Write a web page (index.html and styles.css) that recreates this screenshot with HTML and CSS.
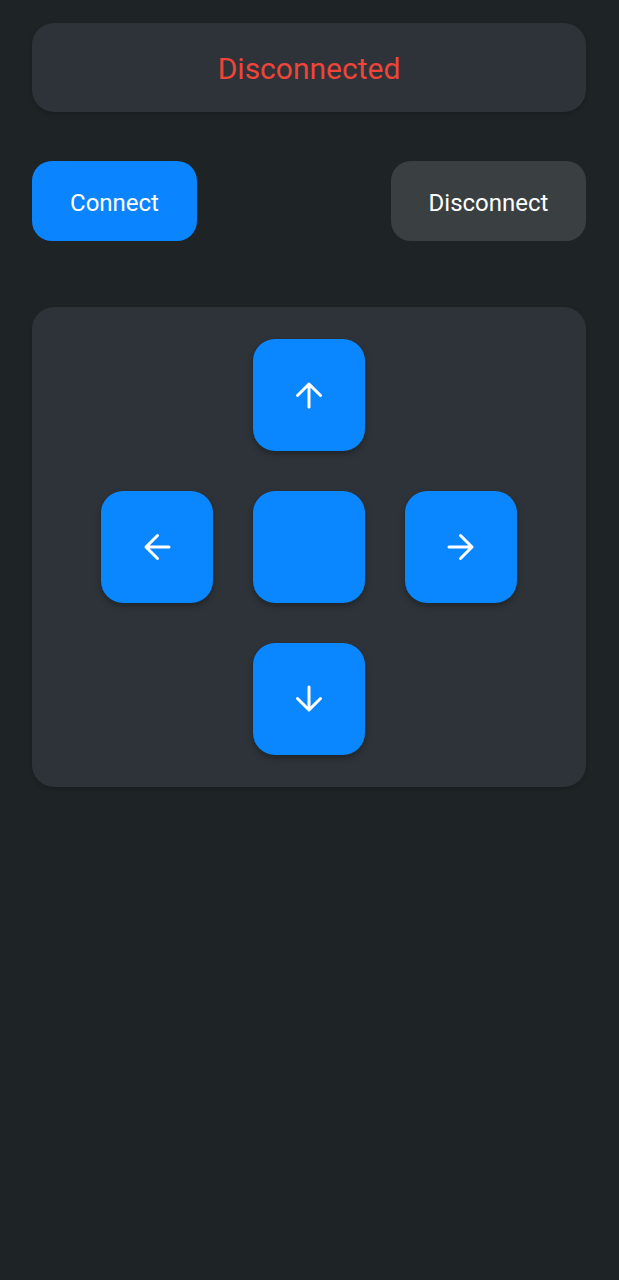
FILE: index.html
```html
<!DOCTYPE html>
<html>
<head>
<meta charset="utf-8">
<link rel="stylesheet" href="styles.css">
</head>
<body>
<div class="app">
  <div class="status-card"><span class="status-text">Disconnected</span></div>
  <div class="actions">
    <button class="btn btn-connect">Connect</button>
    <button class="btn btn-disconnect">Disconnect</button>
  </div>
  <div class="pad-card">
    <div class="pad">
      <button class="key key-up" aria-label="Up">
        <svg viewBox="0 0 28 28" width="28" height="28"><path d="M14 3V26M2.5 14.5L14 3L25.5 14.5"/></svg>
      </button>
      <button class="key key-left" aria-label="Left">
        <svg viewBox="0 0 28 28" width="28" height="28" class="rot-left"><path d="M14 3V26M2.5 14.5L14 3L25.5 14.5"/></svg>
      </button>
      <button class="key key-center" aria-label="Stop"></button>
      <button class="key key-right" aria-label="Right">
        <svg viewBox="0 0 28 28" width="28" height="28" class="rot-right"><path d="M14 3V26M2.5 14.5L14 3L25.5 14.5"/></svg>
      </button>
      <button class="key key-down" aria-label="Down">
        <svg viewBox="0 0 28 28" width="28" height="28" class="rot-down"><path d="M14 3V26M2.5 14.5L14 3L25.5 14.5"/></svg>
      </button>
    </div>
  </div>
</div>
</body>
</html>
```

FILE: styles.css
```css
* { box-sizing: border-box; }
html, body { margin: 0; padding: 0; }
body {
  background: #1e2426;
  font-family: Roboto, "Noto Sans", "Liberation Sans", sans-serif;
  width: 619px;
  min-height: 1280px;
}
.app {
  padding: 23px 33px 0 32px;
  display: flex;
  flex-direction: column;
}
.status-card {
  height: 89px;
  background: #2d3338;
  border-radius: 22px;
  display: flex;
  align-items: center;
  justify-content: center;
  padding-top: 3px;
  box-shadow: 0 2px 4px rgba(0,0,0,0.2);
}
.status-text {
  color: #ef4438;
  font-size: 30px;
  line-height: 1;
}
.actions {
  margin-top: 49px;
  display: flex;
  justify-content: space-between;
}
.btn {
  height: 80px;
  border: none;
  border-radius: 20px;
  color: #ffffff;
  font-family: inherit;
  font-size: 24px;
  padding: 3px 0 0;
}
.btn-connect { width: 165px; background: #0a84ff; }
.btn-disconnect { width: 195px; background: #3a4042; }
.pad-card {
  margin-top: 66px;
  height: 480px;
  background: #2d3338;
  border-radius: 22px;
  display: flex;
  justify-content: center;
  padding-top: 32px;
  box-shadow: 0 2px 4px rgba(0,0,0,0.2);
}
.pad {
  display: grid;
  grid-template-columns: repeat(3, 112px);
  grid-template-rows: repeat(3, 112px);
  gap: 40px;
}
.key {
  width: 112px;
  height: 112px;
  border: none;
  border-radius: 22px;
  background: #0a86ff;
  display: flex;
  align-items: center;
  justify-content: center;
  padding: 0;
  box-shadow: 0 3px 6px rgba(0,0,0,0.3);
}
.key svg path {
  fill: none;
  stroke: #ffffff;
  stroke-width: 3;
  stroke-linecap: round;
  stroke-linejoin: round;
}
.key-up { grid-column: 2; grid-row: 1; }
.key-left { grid-column: 1; grid-row: 2; }
.key-center { grid-column: 2; grid-row: 2; }
.key-right { grid-column: 3; grid-row: 2; }
.key-down { grid-column: 2; grid-row: 3; }
.rot-left { transform: rotate(-90deg); }
.rot-right { transform: rotate(90deg); }
.rot-down { transform: rotate(180deg); }
```
